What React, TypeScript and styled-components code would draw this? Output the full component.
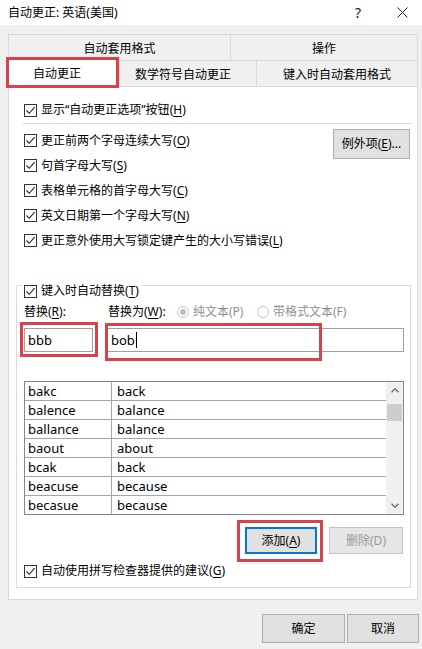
import React from 'react'
import styled, { createGlobalStyle } from 'styled-components'

const GlobalStyle = createGlobalStyle`
	html, body {
		margin: 0;
		padding: 0;
		background: #f0f0f0;
	}
	body {
		font-family: 'Noto Sans', 'Noto Sans CJK SC', sans-serif;
		font-size: 12px;
		line-height: 16px;
		color: #000;
	}
`

const RED = '#d8434b'

const Window = styled.div`
	width: 422px;
	height: 649px;
	background: #f0f0f0;
	display: flex;
	flex-direction: column;
	overflow: hidden;
`

const TitleBar = styled.div`
	height: 25px;
	flex: none;
	background: #fff;
	display: flex;
	align-items: center;
	padding: 0 0 0 8px;
`

const Title = styled.div`
	flex: 1;
	color: #000;
`

const TitleButton = styled.div<{ $w: number }>`
	width: ${p => p.$w}px;
	height: 25px;
	display: flex;
	align-items: center;
	justify-content: center;
	font-size: 14px;
	color: #111;
`

const TabStrip = styled.div`
	margin: 9px 4px 0 8px;
	display: flex;
	flex-direction: column;
`

const TabRow = styled.div`
	display: flex;
	height: 26px;
`

const Tab = styled.div<{ $w?: number; $selected?: boolean; $shift?: number }>`
	position: relative;
	box-sizing: border-box;
	${p => (p.$w ? `width: ${p.$w}px; flex: none;` : 'flex: 1;')}
	display: flex;
	align-items: center;
	justify-content: center;
	padding: 2px ${p => p.$shift ?? 0}px 0 0;
	border: 1px solid #d9d9d9;
	border-bottom: none;
	margin-left: -1px;
	&:first-child {
		margin-left: 0;
	}
	background: #f0f0f0;
	${p =>
		p.$selected &&
		`
		background: #fff;
		z-index: 2;
		margin: -2px -2px -1px -2px;
		height: 29px;
		padding-top: 1px;
		&:first-child { margin-left: -2px; }
	`}
`

const Highlight = styled.div<{
	$top: number
	$left: number
	$w: number
	$h: number
}>`
	position: absolute;
	top: ${p => p.$top}px;
	left: ${p => p.$left}px;
	width: ${p => p.$w}px;
	height: ${p => p.$h}px;
	box-sizing: border-box;
	border: 3px solid ${RED};
	pointer-events: none;
	z-index: 5;
`

const Panel = styled.div`
	box-sizing: border-box;
	height: 514px;
	margin: 0 4px 0 8px;
	background: #fff;
	border: 1px solid #d9d9d9;
	padding: 11px 5px 0 7px;
	display: flex;
	flex-direction: column;
	position: relative;
	z-index: 1;
`

const UpperSection = styled.div`
	padding-left: 8px;
	display: flex;
	flex-direction: column;
`

const Divider = styled.div`
	height: 1px;
	background: #dcdcdc;
	margin: 1px 0 4px -1px;
`

const OptionsBlock = styled.div`
	display: flex;
	align-items: flex-start;
`

const OptionsColumn = styled.div`
	flex: 1;
	display: flex;
	flex-direction: column;
`

const CheckRow = styled.div<{ $h?: number }>`
	height: ${p => p.$h ?? 25}px;
	display: flex;
	align-items: center;
	gap: 4px;
	white-space: nowrap;
`

const Box = styled.span`
	width: 13px;
	height: 13px;
	box-sizing: border-box;
	border: 1px solid #333;
	background: #fff;
	display: inline-flex;
	flex: none;
	align-items: center;
	justify-content: center;
`

const Button = styled.div<{
	$w: number
	$h?: number
	$default?: boolean
	$disabled?: boolean
}>`
	position: relative;
	box-sizing: border-box;
	width: ${p => p.$w}px;
	height: ${p => p.$h ?? 27}px;
	flex: none;
	display: flex;
	align-items: center;
	justify-content: center;
	background: ${p => (p.$disabled ? '#e6e6e6' : '#e1e1e1')};
	border: ${p =>
		p.$default ? '2px solid #0078d7' : `1px solid ${p.$disabled ? '#c4c4c4' : '#adadad'}`};
	color: ${p => (p.$disabled ? '#9a9a9a' : '#000')};
	white-space: nowrap;
`

const ExceptionButton = styled(Button)`
	margin: 1px 2px 0 0;
`

const GroupBox = styled.div`
	margin: 32px 1px 0 0;
	border: 1px solid #dcdcdc;
	padding: 0 6px 8px 7px;
	display: flex;
	flex-direction: column;
`

const Legend = styled(CheckRow)`
	align-self: flex-start;
	margin: -3px 0 0 -2px;
	padding: 0 3px 0 2px;
	background: #fff;
`

const LabelRow = styled.div`
	margin-top: 5px;
	height: 16px;
	display: flex;
	align-items: center;
	white-space: nowrap;
`

const LabelCell = styled.div<{ $w?: number; $muted?: boolean }>`
	${p => (p.$w ? `width: ${p.$w}px; flex: none;` : '')}
	display: flex;
	align-items: center;
	gap: 4px;
	color: ${p => (p.$muted ? '#8f8f8f' : '#000')};
`

const Radio = styled.span<{ $on?: boolean }>`
	width: 12px;
	height: 12px;
	box-sizing: border-box;
	border-radius: 50%;
	border: 1px solid #c4c4c4;
	background: #fff;
	display: inline-flex;
	align-items: center;
	justify-content: center;
	&::after {
		content: '';
		width: 6px;
		height: 6px;
		border-radius: 50%;
		background: ${p => (p.$on ? '#bcbcbc' : 'transparent')};
	}
`

const InputRow = styled.div`
	margin-top: 8px;
	display: flex;
	gap: 14px;
`

const Input = styled.div<{ $w?: number }>`
	position: relative;
	box-sizing: border-box;
	height: 24px;
	${p => (p.$w ? `width: ${p.$w}px; flex: none;` : 'flex: 1;')}
	border: 1px solid #a0a0a0;
	background: #fff;
	display: flex;
	align-items: center;
	padding-left: 3px;
	font-size: 13px;
`

const Caret = styled.span`
	width: 1px;
	height: 16px;
	background: #000;
	margin-left: 1px;
`

const ListBox = styled.div`
	margin-top: 29px;
	box-sizing: border-box;
	height: 134px;
	border: 1px solid #828790;
	display: flex;
	overflow: hidden;
`

const Rows = styled.div`
	flex: 1;
	display: flex;
	flex-direction: column;
`

const Row = styled.div`
	height: 19px;
	flex: none;
	box-sizing: border-box;
	display: flex;
	border-bottom: 1px solid #a5a5a5;
	font-size: 13px;
`

const Cell = styled.div<{ $w?: number; $pad: number }>`
	${p => (p.$w ? `width: ${p.$w}px; flex: none; border-right: 1px solid #a5a5a5;` : 'flex: 1;')}
	padding-left: ${p => p.$pad}px;
	display: flex;
	align-items: center;
`

const ScrollBar = styled.div`
	width: 17px;
	flex: none;
	background: #f0f0f0;
	display: flex;
	flex-direction: column;
	align-items: center;
`

const ScrollArrow = styled.div`
	height: 17px;
	width: 17px;
	display: flex;
	align-items: center;
	justify-content: center;
`

const Thumb = styled.div`
	width: 15px;
	height: 17px;
	margin-top: 5px;
	background: #cdcdcd;
`

const ScrollSpacer = styled.div`
	flex: 1;
`

const ButtonRow = styled.div`
	margin-top: 12px;
	display: flex;
	justify-content: flex-end;
	gap: 12px;
	padding-right: 1px;
`

const BottomCheck = styled(CheckRow)`
	margin-top: 9px;
`

const Footer = styled.div`
	margin-top: 14px;
	display: flex;
	justify-content: flex-end;
	gap: 2px;
	padding-right: 3px;
`

const Label = styled.span`
	white-space: nowrap;
`

const U = styled.span`
	text-decoration: underline;
	text-underline-offset: 2px;
`

function Check() {
	return (
		<Box>
			<svg width="11" height="11" viewBox="0 0 11 11">
				<path d="M1.5 5.5 L4.3 8.3 L9.6 2.2" fill="none" stroke="#222" strokeWidth="1.1" />
			</svg>
		</Box>
	)
}

function Chevron({ down }: { down?: boolean }) {
	return (
		<svg width="8" height="5" viewBox="0 0 8 5">
			<path
				d={down ? 'M0.5 0.8 L4 4.2 L7.5 0.8' : 'M0.5 4.2 L4 0.8 L7.5 4.2'}
				fill="none"
				stroke="#606060"
				strokeWidth="1.2"
			/>
		</svg>
	)
}

// one option line: checkbox + text with the underlined access key
function Option({ text, hotkey }: { text: string; hotkey: string }) {
	return (
		<>
			<Check />
			<Label>
				{text}(<U>{hotkey}</U>)
			</Label>
		</>
	)
}

const options: Array<[string, string]> = [
	['更正前两个字母连续大写', 'O'],
	['句首字母大写', 'S'],
	['表格单元格的首字母大写', 'C'],
	['英文日期第一个字母大写', 'N'],
	['更正意外使用大写锁定键产生的大小写错误', 'L']
]

const entries: Array<[string, string]> = [
	['bakc', 'back'],
	['balence', 'balance'],
	['ballance', 'balance'],
	['baout', 'about'],
	['bcak', 'back'],
	['beacuse', 'because'],
	['becasue', 'because']
]

export default function App() {
	return (
		<>
			<GlobalStyle />
			<Window>
				<TitleBar>
					<Title>自动更正: 英语(美国)</Title>
					<TitleButton $w={30}>?</TitleButton>
					<TitleButton $w={14} />
					<TitleButton $w={30}>
						<svg width="11" height="11" viewBox="0 0 11 11">
							<path d="M0.5 0.5 L10.5 10.5 M10.5 0.5 L0.5 10.5" stroke="#222" strokeWidth="1" />
						</svg>
					</TitleButton>
					<TitleButton $w={5} />
				</TitleBar>

				<TabStrip>
					<TabRow>
						<Tab $w={223}>自动套用格式</Tab>
						<Tab>操作</Tab>
					</TabRow>
					<TabRow>
						<Tab $w={114} $selected $shift={12}>
							自动更正
							<Highlight $top={-2} $left={-1} $w={113} $h={31} />
						</Tab>
						<Tab $w={140} $shift={8}>
							数学符号自动更正
						</Tab>
						<Tab>键入时自动套用格式</Tab>
					</TabRow>
				</TabStrip>

				<Panel>
					<UpperSection>
						<CheckRow $h={24}>
							<Option text="显示“自动更正选项”按钮" hotkey="H" />
						</CheckRow>
						<Divider />
						<OptionsBlock>
							<OptionsColumn>
								{options.map(([text, key]) => (
									<CheckRow key={key}>
										<Option text={text} hotkey={key} />
									</CheckRow>
								))}
							</OptionsColumn>
							<ExceptionButton $w={77} $h={30}>
								<Label>
									例外项(<U>E</U>)...
								</Label>
							</ExceptionButton>
						</OptionsBlock>
					</UpperSection>

					<GroupBox>
						<Legend $h={16}>
							<Option text="键入时自动替换" hotkey="T" />
						</Legend>
						<LabelRow>
							<LabelCell $w={84}>
								<Label>
									替换(<U>R</U>):
								</Label>
							</LabelCell>
							<LabelCell $w={69}>
								<Label>
									替换为(<U>W</U>):
								</Label>
							</LabelCell>
							<LabelCell $w={80} $muted>
								<Radio $on />
								<Label>纯文本(P)</Label>
							</LabelCell>
							<LabelCell $muted>
								<Radio />
								<Label>带格式文本(F)</Label>
							</LabelCell>
						</LabelRow>
						<InputRow>
							<Input $w={69}>
								bbb
								<Highlight $top={-7} $left={-5} $w={78} $h={35} />
							</Input>
							<Input>
								bob
								<Caret />
								<Highlight $top={-6} $left={-3} $w={217} $h={38} />
							</Input>
						</InputRow>
						<ListBox>
							<Rows>
								{entries.map(([from, to]) => (
									<Row key={from}>
										<Cell $w={83} $pad={3}>
											{from}
										</Cell>
										<Cell $pad={5}>{to}</Cell>
									</Row>
								))}
							</Rows>
							<ScrollBar>
								<ScrollArrow>
									<Chevron />
								</ScrollArrow>
								<Thumb />
								<ScrollSpacer />
								<ScrollArrow>
									<Chevron down />
								</ScrollArrow>
							</ScrollBar>
						</ListBox>
						<ButtonRow>
							<Button $w={72} $default>
								<Label>
									添加(<U>A</U>)
								</Label>
								<Highlight $top={-9} $left={-10} $w={86} $h={42} />
							</Button>
							<Button $w={74} $disabled>
								删除(D)
							</Button>
						</ButtonRow>
						<BottomCheck $h={16}>
							<Option text="自动使用拼写检查器提供的建议" hotkey="G" />
						</BottomCheck>
					</GroupBox>
				</Panel>

				<Footer>
					<Button $w={83} $h={29}>
						确定
					</Button>
					<Button $w={72} $h={29}>
						取消
					</Button>
				</Footer>
			</Window>
		</>
	)
}
